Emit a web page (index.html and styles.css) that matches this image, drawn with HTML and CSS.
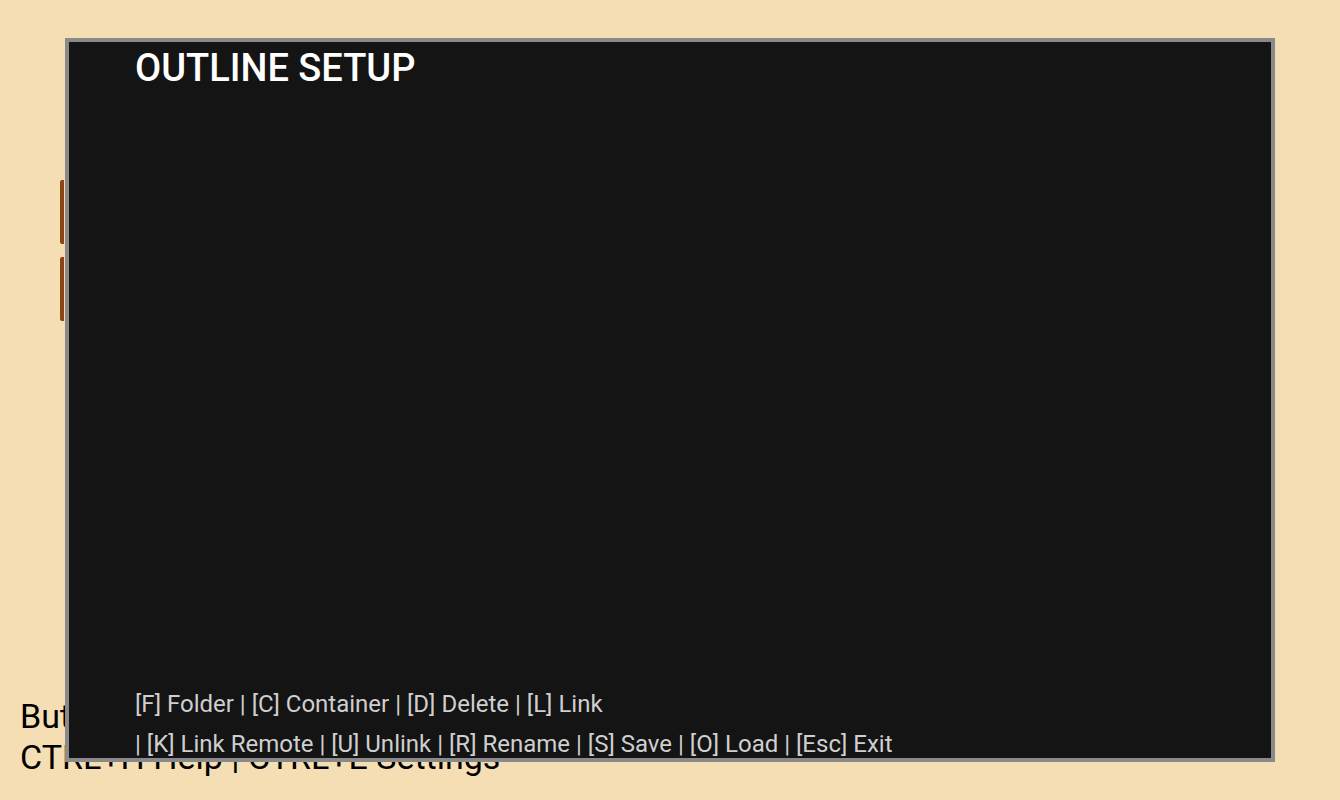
FILE: index.html
```html
<!DOCTYPE html>
<html lang="en">
<head>
<meta charset="utf-8">
<title>Outline Setup</title>
<link rel="stylesheet" href="styles.css">
</head>
<body>
<main class="page">
  <ul class="items">
    <li class="item">Main Outline</li>
    <li class="item">Secondary Outline</li>
  </ul>
  <footer class="hints">
    <div class="hint-line">Buttons: Click to select | Drag to reorder</div>
    <div class="hint-line">CTRL+H Help | CTRL+E Settings</div>
  </footer>
</main>
<section class="modal">
  <h1 class="modal-title">OUTLINE SETUP</h1>
  <div class="modal-body"></div>
  <div class="modal-keys">
    <div class="keys-line">[F] Folder | [C] Container | [D] Delete | [L] Link</div>
    <div class="keys-line">| [K] Link Remote | [U] Unlink | [R] Rename | [S] Save | [O] Load | [Esc] Exit</div>
  </div>
</section>
</body>
</html>
```

FILE: styles.css
```css
html, body {
  margin: 0;
  padding: 0;
  height: 100%;
}
body {
  background: #f5deb3;
  font-family: Roboto, "Liberation Sans", sans-serif;
  color: #000;
  overflow: hidden;
}
.page {
  height: 800px;
  display: flex;
  flex-direction: column;
  justify-content: space-between;
}
.items {
  list-style: none;
  margin: 180px 0 0 60px;
  padding: 0;
  display: flex;
  flex-direction: column;
  gap: 13px;
}
.item {
  height: 64px;
  width: 600px;
  border-left: 4px solid #8b4513;
  border-radius: 2px;
  background: #f5deb3;
  color: transparent;
  font-size: 24px;
}
.hints {
  padding: 0 0 22px 20px;
  font-size: 34px;
  line-height: 41px;
}
.modal {
  position: absolute;
  left: 65px;
  top: 38px;
  width: 1136px;
  height: 716px;
  border: 4px solid #8a8a8a;
  background: #141414;
  display: flex;
  flex-direction: column;
  padding: 0 0 0 66px;
  box-sizing: content-box;
}
.modal-title {
  margin: 2px 0 0;
  font-size: 38px;
  font-weight: 500;
  color: #fff;
  line-height: 48px;
}
.modal-body {
  flex: 1;
}
.modal-keys {
  color: #cfcfcf;
  font-size: 24px;
  line-height: 28px;
  display: flex;
  flex-direction: column;
  gap: 12px;
}
.keys-line {
  white-space: nowrap;
}
```
